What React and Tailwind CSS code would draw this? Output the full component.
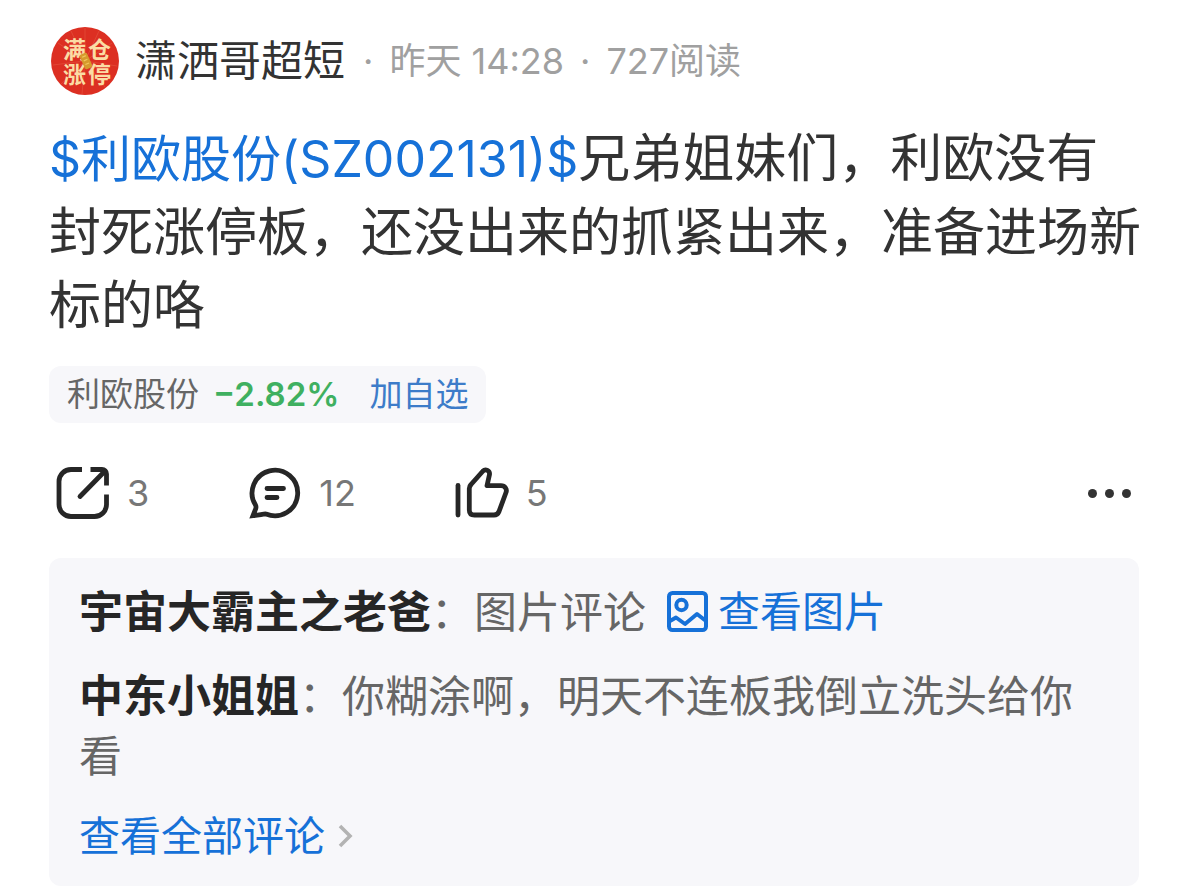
const post = {
  author: '潇洒哥超短',
  time: '昨天 14:28',
  reads: '727阅读',
  ticker: '$利欧股份(SZ002131)$',
  body: '兄弟姐妹们，利欧没有封死涨停板，还没出来的抓紧出来，准备进场新标的咯',
  stock: { name: '利欧股份', change: '−2.82%' },
};

const Avatar = () => (
  <svg className="w-17 h-17 shrink-0" viewBox="0 0 68 68" role="img" aria-label={post.author}>
    <circle cx="34" cy="34" r="34" fill="#dc2f22" />
    <g stroke="#e8604a" strokeWidth="0.6" opacity="0.8">
      <path d="M34 34L34 1M34 34L48 4M34 34L61 16M34 34L66 39M34 34L54 60M34 34L31 67M34 34L10 57M34 34L2 38M34 34L7 16M34 34L20 4" />
    </g>
    <g
      fill="#fbdca4"
      fontSize="23"
      fontWeight="700"
      fontFamily="'Noto Sans CJK SC', sans-serif"
    >
      <text x="12" y="31">满</text>
      <text x="37" y="31">仓</text>
      <text x="12" y="56">涨</text>
      <text x="37" y="56">停</text>
    </g>
    <g transform="rotate(-24 35 34)">
      <rect x="31" y="26" width="8" height="16" rx="2" fill="#d69a2d" />
      <path d="M33 29h4M33 33h4M33 37h4" stroke="#f0c65c" strokeWidth="1.2" />
    </g>
  </svg>
);

const iconProps = {
  viewBox: '0 0 56 56',
  fill: 'none',
  stroke: '#262626',
  strokeWidth: 4.8,
  strokeLinecap: 'round',
  strokeLinejoin: 'round',
  'aria-hidden': true,
};

const ShareIcon = () => (
  <svg className="w-14 h-14" {...iconProps} strokeLinecap="butt">
    <path d="M27 4.5H16A12 12 0 0 0 4 16.5V39.5A12 12 0 0 0 16 51.5H39.5A12 12 0 0 0 51.5 39.5V29.5" />
    <path d="M35.5 4.5H47A4.5 4.5 0 0 1 51.5 9V20.5" />
    <path d="M25 31.5L49 7" strokeLinecap="round" />
  </svg>
);

const CommentIcon = () => (
  <svg className="w-14 h-14" {...iconProps}>
    <path
      d="M8.5 40A22.8 22.8 0 1 1 19 49C17 48.7 14 49.7 6 50.7L8.8 43.5C9.2 42 9 41 8.5 40Z"
      strokeLinejoin="miter"
    />
    <path d="M20 23.5H36.5M20 32.5H30" />
  </svg>
);

const LikeIcon = () => (
  <svg className="w-14 h-14" {...iconProps}>
    <path d="M4 20.5V50" />
    <path d="M17 19.5L29 6C31.5 3.5 36 5.5 35.5 9.5L33 20.7H47C51 20.7 53.3 24 52 27.5L45 46.5C44 49 42.500 50 40 50H20.5C17 50 15.3 48.3 15.3 45V23.5C15.3 22 15.8 20.8 17 19.5Z" />
  </svg>
);

const ImageIcon = () => (
  <svg
    className="w-11 h-11"
    viewBox="0 0 44 44"
    fill="none"
    stroke="#1671d8"
    strokeWidth="4"
    strokeLinejoin="round"
    aria-hidden
  >
    <rect x="3" y="3" width="37" height="37" rx="3.5" />
    <circle cx="15.5" cy="15" r="5.2" />
    <path d="M4 31L10 27.5L19 34L31 24L40 31" />
  </svg>
);

const actions = [
  { label: '转发', count: 3, Icon: ShareIcon },
  { label: '评论', count: 12, Icon: CommentIcon },
  { label: '点赞', count: 5, Icon: LikeIcon },
];

const App = () => (
  <article className="bg-white pt-6 pb-2 pl-[49px] pr-12 font-['Inter','Noto_Sans_CJK_SC',sans-serif] text-[#333333]">
    <header className="flex items-center h-[74px] pl-0.5">
      <Avatar />
      <h1 className="ml-4 text-[42px] leading-[60px]">{post.author}</h1>
      <p className="ml-[18px] flex gap-4 text-[36px] leading-[60px] text-[#a0a0a0]">
        <span>·</span>
        <span>{post.time}</span>
        <span>·</span>
        <span>{post.reads}</span>
      </p>
    </header>

    <p className="mt-6 -mr-1 text-[52px] leading-[73px]">
      <a href="#stock" className="text-[50px] text-[#1671d8]">{post.ticker}</a>
      {post.body}
    </p>

    <div className="mt-6 inline-flex items-center h-[57px] px-[18px] rounded-xl bg-[#f7f7fa] text-[33px]">
      <span className="text-[#666666]">{post.stock.name}</span>
      <span className="ml-3.5 font-semibold text-[#3fb060]">{post.stock.change}</span>
      <button type="button" className="ml-[30px] text-[#3d7cc9]">加自选</button>
    </div>

    <div className="mt-[38px] flex items-center h-16 pl-1.5">
      <div className="flex grow items-center gap-[98px]">
        {actions.map(({ label, count, Icon }) => (
          <button key={label} type="button" aria-label={label} className="flex items-center gap-4 text-[36px] text-[#777777]">
            <Icon />
            {count}
          </button>
        ))}
      </div>
      <button type="button" aria-label="更多" className="flex gap-2 p-2">
        <span className="w-[9px] h-[9px] rounded-full bg-[#333333]" />
        <span className="w-[9px] h-[9px] rounded-full bg-[#333333]" />
        <span className="w-[9px] h-[9px] rounded-full bg-[#333333]" />
      </button>
    </div>

    <section className="mt-[33px] pt-6 pb-5 pl-[30px] pr-8 rounded-xl bg-[#f7f7fa] text-[43px] leading-[60px] text-[#666666]">
      <div className="flex flex-wrap items-center">
        <p>
          <b className="text-[44px] text-[#262626]">宇宙大霸主之老爸</b>：图片评论
        </p>
        <a href="#image" className="ml-5 flex items-center gap-2 text-[42px] text-[#1671d8]">
          <ImageIcon />
          查看图片
        </a>
      </div>
      <p className="mt-6">
        <b className="text-[44px] text-[#262626]">中东小姐姐</b>：你糊涂啊，明天不连板我倒立洗头给你看
      </p>
      <a href="#comments" className="mt-5 inline-flex items-center gap-3 text-[41px] text-[#1671d8]">
        查看全部评论
        <svg className="w-4 h-7" viewBox="0 0 16 28" fill="none" stroke="#b3b3b3" strokeWidth="3.6" aria-hidden>
          <path d="M3 4L13 14L3 24" />
        </svg>
      </a>
    </section>
  </article>
);

export default App;
